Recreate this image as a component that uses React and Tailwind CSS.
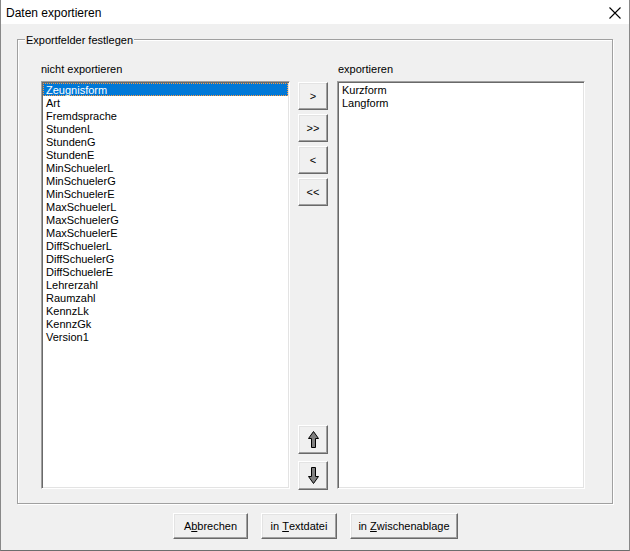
import React from "react";

const leftItems = [
  "Zeugnisform","Art","Fremdsprache","StundenL","StundenG","StundenE",
  "MinSchuelerL","MinSchuelerG","MinSchuelerE","MaxSchuelerL","MaxSchuelerG",
  "MaxSchuelerE","DiffSchuelerL","DiffSchuelerG","DiffSchuelerE","Lehrerzahl",
  "Raumzahl","KennzLk","KennzGk","Version1",
];
const rightItems = ["Kurzform", "Langform"];

const raised =
  "bg-[#f0f0f0] border border-t-white border-l-white border-r-[#696969] border-b-[#696969] shadow-[inset_-1px_-1px_0_#a0a0a0,inset_1px_1px_0_#e3e3e3] flex items-center justify-center text-black";
const sunken =
  "bg-white border border-t-[#a0a0a0] border-l-[#a0a0a0] border-r-white border-b-white shadow-[inset_1px_1px_0_#696969,inset_-1px_-1px_0_#e3e3e3] p-[1px]";

function Arrow({ up }) {
  return (
    <svg width="11" height="17" viewBox="0 0 11 17" className={up ? "" : "rotate-180"}>
      <path d="M5.5 0.5 L10.5 7.5 L7.5 7.5 L7.5 16.5 L3.5 16.5 L3.5 7.5 L0.5 7.5 Z" fill="#808080" stroke="#000" strokeWidth="1" />
    </svg>
  );
}

export default function App() {
  return (
    <div className="w-[630px] h-[551px] flex flex-col bg-white border-x border-b border-x-[#888] border-b-[#6d6d6d] text-[11px] leading-[13px] text-black font-['Liberation_Sans',Arial,sans-serif]">
      <div className="h-[24px] shrink-0 bg-white flex items-center justify-between pl-[5px] pr-[8px]">
        <span className="text-[12px] leading-[16px] mt-[2px]">Daten exportieren</span>
        <svg width="12" height="12" viewBox="0 0 12 12" className="mt-[2px]">
          <path d="M0.5 0.5 L11.5 11.5 M11.5 0.5 L0.5 11.5" stroke="#000" strokeWidth="1.1" />
        </svg>
      </div>
      <div className="flex-1 bg-[#f0f0f0] flex flex-col pl-[16px]">
        <div className="relative mt-[15px] w-[596px] h-[465px] border border-[#a0a0a0] shadow-[inset_1px_1px_0_white,1px_1px_0_white]">
          <span className="absolute left-[7px] -top-[6px] bg-[#f0f0f0] px-[1px]">Exportfelder festlegen</span>
          <div className="flex pl-[23px] pt-[23px]">
            <div className="flex flex-col">
              <div className="h-[13px]">nicht exportieren</div>
              <div className={`mt-[5px] w-[249px] h-[408px] ${sunken}`}>
                {leftItems.map((it, i) => (
                  <div
                    key={it}
                    className={
                      i === 0
                        ? "h-[13px] bg-[#0078d7] text-white pl-[2px] border border-dotted border-[#ff9a3c] leading-[12px]"
                        : "h-[13px] pl-[3px] leading-[14px]"
                    }
                  >
                    {it}
                  </div>
                ))}
              </div>
            </div>
            <div className="ml-[8px] pt-[19px] flex flex-col w-[30px]">
              <div className="flex flex-col gap-[4px]">
                <button className={`h-[28px] ${raised}`}>&gt;</button>
                <button className={`h-[28px] ${raised}`}>&gt;&gt;</button>
                <button className={`h-[28px] ${raised}`}>&lt;</button>
                <button className={`h-[28px] ${raised}`}>&lt;&lt;</button>
              </div>
              <div className="mt-[219px] flex flex-col gap-[7px]">
                <button className={`h-[29px] ${raised}`}><Arrow up /></button>
                <button className={`h-[29px] ${raised}`}><Arrow /></button>
              </div>
            </div>
            <div className="ml-[9px] flex flex-col">
              <div className="h-[13px] pl-[1px]">exportieren</div>
              <div className={`mt-[5px] w-[248px] h-[408px] ${sunken}`}>
                {rightItems.map((it) => (
                  <div key={it} className="h-[13px] pl-[3px] leading-[14px]">{it}</div>
                ))}
              </div>
            </div>
          </div>
        </div>
        <div className="mt-[9px] ml-[156px] flex gap-[13px]">
          <button className={`w-[75px] h-[26px] ${raised}`}>A<span className="underline">b</span>brechen</button>
          <button className={`w-[76px] h-[26px] ${raised}`}>in&nbsp;<span className="underline">T</span>extdatei</button>
          <button className={`w-[108px] h-[26px] ${raised}`}>in&nbsp;<span className="underline">Z</span>wischenablage</button>
        </div>
      </div>
    </div>
  );
}
